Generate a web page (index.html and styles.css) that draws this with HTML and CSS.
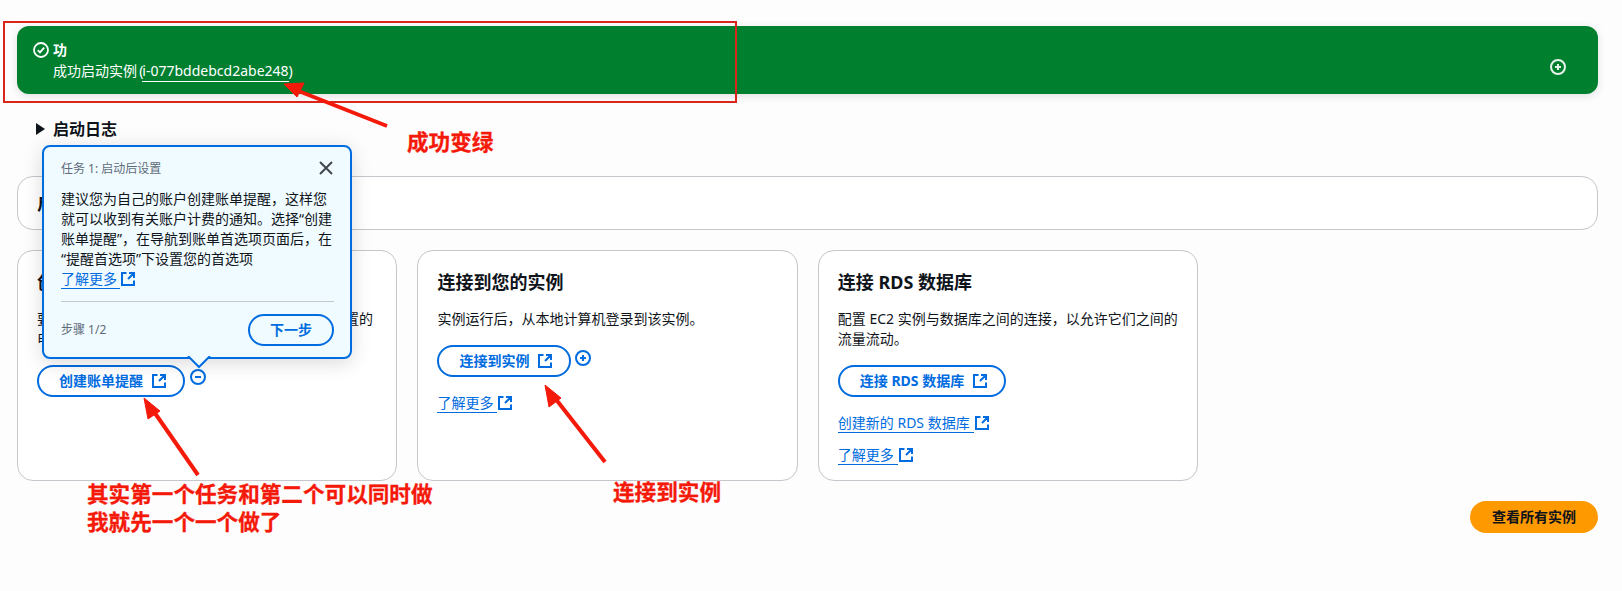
FILE: index.html
```html
<!DOCTYPE html>
<html lang="zh-CN">
<head>
<meta charset="utf-8">
<title>成功启动实例</title>
<link rel="stylesheet" href="styles.css">
</head>
<body>
<svg width="0" height="0" class="defs">
  <symbol id="ext" viewBox="0 0 16 16"><path d="M6.5 2H2v12h12V9.5M9 2h5v5M14 2 8 8" fill="none" stroke="currentColor" stroke-width="2"/></symbol>
  <symbol id="plus" viewBox="0 0 16 16"><circle cx="8" cy="8" r="7" fill="none" stroke="currentColor" stroke-width="2"/><path d="M5 8h6M8 5v6" fill="none" stroke="currentColor" stroke-width="2"/></symbol>
  <symbol id="minus" viewBox="0 0 16 16"><circle cx="8" cy="8" r="7" fill="none" stroke="currentColor" stroke-width="2"/><path d="M5 8h6" fill="none" stroke="currentColor" stroke-width="2"/></symbol>
</svg>
<main class="page">
  <section class="banner">
    <svg class="icon16" viewBox="0 0 16 16"><circle cx="8" cy="8" r="7" fill="none" stroke="currentColor" stroke-width="1.8"/><path d="m4.8 8.2 2.2 2.2 4.2-4.8" fill="none" stroke="currentColor" stroke-width="1.8"/></svg>
    <div class="banner-text">
      <div class="banner-title">功</div>
      <div class="banner-desc">成功启动实例 (<span class="banner-id">i-077bddebcd2abe248</span>)</div>
    </div>
    <svg class="icon16 banner-plus"><use href="#plus"/></svg>
  </section>

  <div class="log-row">
    <svg class="caret" viewBox="0 0 9 12"><path d="M0 0 9 6 0 12z"/></svg>
    <span>启动日志</span>
  </div>

  <section class="panel"><h2 class="panel-title">启动后设置</h2></section>

  <div class="cards">
    <article class="card">
      <h3 class="card-title">创建账单提醒</h3>
      <p class="card-body">要管理成本并避免意外账单，请通过账单阈值来设置的电子邮件通知。</p>
      <div class="action">
        <a class="btn">创建账单提醒<svg class="icon16 btn-icon"><use href="#ext"/></svg></a>
        <svg class="icon16 hotspot hotspot-open"><use href="#minus"/></svg>
      </div>
    </article>
    <article class="card">
      <h3 class="card-title">连接到您的实例</h3>
      <p class="card-body">实例运行后，从本地计算机登录到该实例。</p>
      <div class="action">
        <a class="btn">连接到实例<svg class="icon16 btn-icon"><use href="#ext"/></svg></a>
        <svg class="icon16 hotspot"><use href="#plus"/></svg>
      </div>
      <div class="link-row"><a class="link">了解更多</a><svg class="icon16 link-icon"><use href="#ext"/></svg></div>
    </article>
    <article class="card">
      <h3 class="card-title">连接 RDS 数据库</h3>
      <p class="card-body">配置 EC2 实例与数据库之间的连接，以允许它们之间的流量流动。</p>
      <div class="action">
        <a class="btn">连接 RDS 数据库<svg class="icon16 btn-icon"><use href="#ext"/></svg></a>
      </div>
      <div class="link-row"><a class="link">创建新的 RDS 数据库</a><svg class="icon16 link-icon"><use href="#ext"/></svg></div>
      <div class="link-row link-row-tight"><a class="link">了解更多</a><svg class="icon16 link-icon"><use href="#ext"/></svg></div>
    </article>
  </div>

  <div class="footer"><a class="btn-primary">查看所有实例</a></div>
</main>

<aside class="popover">
  <div class="pop-head">
    <span class="pop-small">任务 1: 启动后设置</span>
    <svg class="pop-close" viewBox="0 0 16 16"><path d="M2 2l12 12M14 2 2 14" fill="none" stroke="#424650" stroke-width="2"/></svg>
  </div>
  <p class="pop-body">建议您为自己的账户创建账单提醒，这样您就可以收到有关账户计费的通知。选择“创建账单提醒”，在导航到账单首选项页面后，在“提醒首选项”下设置您的首选项</p>
  <div class="link-row link-row-pop"><a class="link link-pop">了解更多</a><svg class="icon16 link-icon"><use href="#ext"/></svg></div>
  <div class="pop-foot">
    <span class="pop-small">步骤 1/2</span>
    <a class="btn btn-next">下一步</a>
  </div>
  <svg class="pop-arrow" viewBox="0 0 24 13"><path d="M1 0 12 11 23 0" fill="#f0fbff" stroke="#006ce0" stroke-width="2"/></svg>
</aside>

<svg class="marks" viewBox="0 0 1622 591">
  <rect x="4" y="22" width="732" height="80" fill="none" stroke="#d9261c" stroke-width="2"/>
  <g fill="#f5190a" stroke="#f5190a">
    <path d="M387 126 296 90" stroke-width="4" fill="none"/>
    <path d="M284 84 304 83 297 97z" stroke-width="1"/>
    <path d="M198 475 150 406" stroke-width="4" fill="none"/>
    <path d="M144 398 160 411 148 419z" stroke-width="1"/>
    <path d="M605 462 551 393" stroke-width="4" fill="none"/>
    <path d="M545 385 561 398 549 407z" stroke-width="1"/>
  </g>
</svg>
<span class="note note-green">成功变绿</span>
<span class="note note-task">其实第一个任务和第二个可以同时做<br>我就先一个一个做了</span>
<span class="note note-connect">连接到实例</span>
</body>
</html>
```

FILE: styles.css
```css
* { box-sizing: border-box; }
html, body { margin: 0; padding: 0; }
body {
  width: 1622px;
  height: 591px;
  overflow: hidden;
  position: relative;
  background: #fdfdfd;
  color: #0f141a;
  font: 14px/20px "Noto Sans", "Noto Sans CJK SC", sans-serif;
}
.defs { position: absolute; }
.page { padding: 26px 24px 0 17px; }
.icon16 { width: 16px; height: 16px; flex: none; display: block; }

.banner {
  display: flex;
  gap: 4px;
  height: 68px;
  padding: 14px 32px 0 16px;
  border-radius: 12px;
  background: #00802f;
  color: #fff;
  box-shadow: 0 2px 8px rgba(0, 7, 22, .12);
}
.banner .icon16:first-child { margin-top: 2px; }
.banner-title { font-weight: 700; }
.banner-desc { margin-top: 1px; word-spacing: -1.5px; }
.banner-id { border-bottom: 1px solid #fff; padding-bottom: 1px; margin-left: -1px; }
.banner-plus { margin: 19px 0 0 auto; color: #e6f2ea; }

.log-row {
  display: flex;
  align-items: center;
  gap: 8px;
  height: 24px;
  margin-top: 23px;
  padding-left: 19px;
  font-size: 16px;
  font-weight: 700;
}
.caret { width: 9px; height: 12px; fill: #0f141a; }

.panel {
  height: 54px;
  margin-top: 35px;
  padding: 14px 19px;
  background: #fff;
  border: 1px solid #c6c6cd;
  border-radius: 16px;
}
.panel-title { margin: 0; font-size: 18px; line-height: 24px; }

.cards {
  display: grid;
  grid-template-columns: repeat(3, 380.4px);
  column-gap: 20px;
  margin-top: 20px;
}
.card {
  height: 231px;
  padding: 19px 16px 20px 19px;
  background: #fff;
  border: 1px solid #c6c6cd;
  border-radius: 16px;
}
.card-title { margin: 0; font-size: 18px; line-height: 24px; font-weight: 700; }
.card-body { margin: 15px 0 16px; }

.action { display: flex; align-items: flex-start; }
.btn {
  display: inline-flex;
  align-items: center;
  height: 32px;
  padding: 0 16px 0 20px;
  border: 2px solid #006ce0;
  border-radius: 16px;
  color: #006ce0;
  font-weight: 700;
  white-space: nowrap;
}
.btn-icon { margin-left: 8px; }
.hotspot { margin: 5px 0 0 4px; color: #006ce0; }
.hotspot-open { margin: 4px 0 0 5px; }

.link-row { display: flex; align-items: flex-start; margin-top: 16px; height: 20px; color: #006ce0; }
.link-row-tight { margin-top: 12px; }
.link { border-bottom: 1px solid #006ce0; padding-right: 4px; height: 20px; white-space: nowrap; }
.link-pop { padding-right: 3px; }
.link-icon { margin-top: 2px; }

.footer { display: flex; justify-content: flex-end; margin-top: 20px; }
.btn-primary {
  display: flex;
  align-items: center;
  justify-content: center;
  width: 128px;
  height: 32px;
  border-radius: 16px;
  background: #ff9900;
  color: #0f141a;
  font-weight: 700;
}

.popover {
  position: absolute;
  left: 42px;
  top: 145px;
  width: 310px;
  height: 214px;
  padding: 12px 16px 0 17px;
  background: #f0fbff;
  border: 2px solid #006ce0;
  border-radius: 8px;
  box-shadow: 0 4px 20px rgba(0, 7, 22, .15);
}
.pop-head { display: flex; justify-content: space-between; align-items: center; height: 20px; }
.pop-small { font-size: 12px; color: #5f6b7a; }
.pop-close { width: 16px; height: 16px; margin-top: -2px; }
.pop-body { margin: 10px 0 0; }
.link-row-pop { margin-top: 0; }
.pop-foot {
  display: flex;
  justify-content: space-between;
  align-items: center;
  margin-top: 12px;
  padding-top: 12px;
  border-top: 1px solid #c6c6cd;
}
.btn-next { padding: 0 20px; background: transparent; }
.pop-arrow {
  position: absolute;
  left: 143px;
  bottom: -12px;
  width: 24px;
  height: 13px;
  display: block;
}

.marks { position: absolute; left: 0; top: 0; width: 1622px; height: 591px; pointer-events: none; }
.note {
  position: absolute;
  font-family: "Noto Sans CJK SC", sans-serif;
  font-size: 21.6px;
  line-height: 28px;
  font-weight: 700;
  color: #f5190a;
  white-space: nowrap;
  -webkit-text-stroke: .3px #f5190a;
}
.note-green { left: 407px; top: 127px; }
.note-task { left: 87px; top: 479px; }
.note-connect { left: 613px; top: 477px; }
```
